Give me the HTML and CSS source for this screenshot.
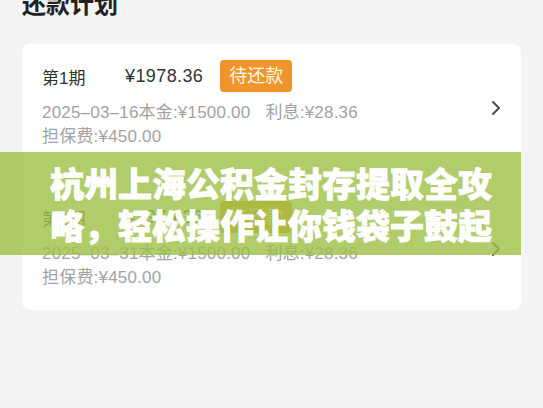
FILE: index.html
```html
<!DOCTYPE html>
<html lang="zh-CN">

<head>
    <meta charset="UTF-8">
    <title>还款计划</title>
    <link rel="stylesheet" href="styles.css">
</head>

<body>
    <div class="page">
        <h1 class="title">还款计划</h1>

        <div class="card">
            <div class="item">
                <div class="item-body">
                    <div class="item-head">
                        <span class="period">第1期</span>
                        <span class="amount">¥1978.36</span>
                        <span class="badge">待还款</span>
                    </div>
                    <div class="detail">2025–03–16本金:¥1500.00<span class="gap">利息:¥28.36</span></div>
                    <div class="detail">担保费:¥450.00</div>
                </div>
                <svg class="arrow" width="10" height="16" viewBox="0 0 10 16">
                    <path d="M2 2 L8 8 L2 14" fill="none" stroke="#4a4a4a" stroke-width="2" stroke-linecap="round" stroke-linejoin="round"/>
                </svg>
            </div>

            <div class="item">
                <div class="item-body">
                    <div class="item-head">
                        <span class="period">第2期</span>
                        <span class="amount">¥1978.36</span>
                        <span class="badge">待还款</span>
                    </div>
                    <div class="detail">2025–03–31本金:¥1500.00<span class="gap">利息:¥28.36</span></div>
                    <div class="detail">担保费:¥450.00</div>
                </div>
                <svg class="arrow" width="10" height="16" viewBox="0 0 10 16">
                    <path d="M2 2 L8 8 L2 14" fill="none" stroke="#4a4a4a" stroke-width="2" stroke-linecap="round" stroke-linejoin="round"/>
                </svg>
            </div>
        </div>

        <!-- overlay headline -->
        <div class="banner">
            <p>杭州上海公积金封存提取全攻</p>
            <p>略，轻松操作让你钱袋子鼓起</p>
        </div>
    </div>
</body>

</html>
```

FILE: styles.css
```css
body {
    margin: 0;
    background: #f4f4f4;
    font-family: "Noto Sans CJK SC", "Noto Sans", sans-serif;
}

.page {
    position: relative;
    width: 543px;
    height: 408px;
    overflow: hidden;
}

.title {
    margin: -9px 0 0 22px;
    font-size: 24px;
    line-height: 24px;
    font-weight: 700;
    color: #222;
}

.card {
    margin: 29px 22px 0 22px;
    width: 499px;
    box-sizing: border-box;
    padding: 16px 20px 20px 20px;
    background: #fff;
    border-radius: 8px;
    display: flex;
    flex-direction: column;
    gap: 52px;
    font-family: "Liberation Sans", "Noto Sans CJK SC", sans-serif;
}

.item {
    display: flex;
    align-items: center;
}

.item-body {
    flex: 1;
}

.item-head {
    display: flex;
    align-items: center;
    height: 32px;
    margin-bottom: 9px;
    color: #333;
}

.period {
    width: 83px;
    font-size: 17px;
}

.amount {
    font-size: 18px;
    letter-spacing: 0.4px;
    margin-right: 17px;
}

.badge {
    height: 32px;
    line-height: 32px;
    padding: 0 9px;
    border-radius: 4px;
    background: #f0952b;
    color: #fff6e6;
    font-size: 18px;
}

.detail {
    font-size: 17px;
    line-height: 24px;
    letter-spacing: 0.2px;
    color: #a3a3a3;
}

.gap {
    margin-left: 15px;
}

.arrow {
    margin-top: 6px;
}

/* green headline over the list */

.banner {
    position: absolute;
    left: 0;
    top: 152px;
    width: 521px;
    height: 103px;
    box-sizing: border-box;
    padding: 10px 0 0 50px;
    background: rgba(159, 193, 74, 0.82);
}

.banner p {
    margin: 0;
    font-size: 34px;
    line-height: 42px;
    font-weight: 900;
    color: #fff;
    -webkit-text-stroke: 0.8px #fff;
    white-space: nowrap;
}
```
